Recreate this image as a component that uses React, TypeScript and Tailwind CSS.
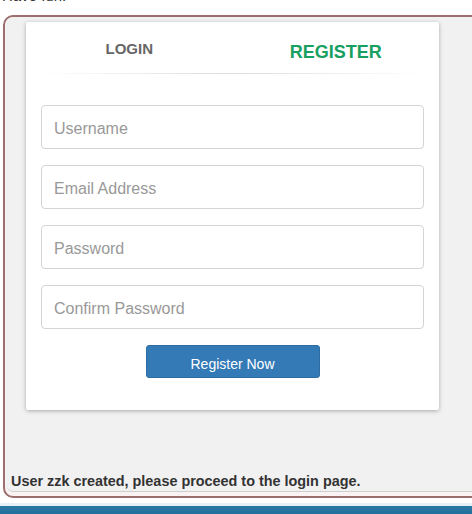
import React from "react";

export default function App() {
  const fields = ["Username", "Email Address", "Password", "Confirm Password"];
  return (
    <div className="relative w-[472px] h-[514px] overflow-hidden bg-white font-['Liberation_Sans',Arial,sans-serif]">
      <div className="h-[15px] overflow-hidden">
        <div className="-mt-[12px] ml-[2px] text-[15px] leading-[16px] text-[#333]">Have fun.</div>
      </div>
      <div className="ml-[3px] w-[490px] h-[483px] border-2 border-[#9c6e6e] rounded-[10px] bg-[#fbf3f3] pt-0 pl-[1px] pb-[4px]">
        <div className="h-full flex flex-col bg-[#f1f1f1] border-b border-[#cfcfcf] rounded-tl-[8px] rounded-bl-[8px]">
          <div className="ml-[20px] mt-[5px] w-[413px] h-[388px] bg-white rounded-[2px] shadow-[0_1px_4px_rgba(0,0,0,0.3)] flex flex-col">
            <div className="flex h-[51px]">
              <div className="flex-1 flex justify-center pt-[19px]">
                <span className="text-[15px] leading-[16px] font-bold text-[#666]">LOGIN</span>
              </div>
              <div className="flex-1 flex justify-center pt-[20px]">
                <span className="text-[18px] leading-[20px] font-bold text-[#17a060]">REGISTER</span>
              </div>
            </div>
            <div className="mx-[14px] h-px bg-gradient-to-r from-transparent via-[#dcdcdc] to-transparent" />
            <div className="mt-[31px] px-[15px] flex flex-col gap-[16px]">
              {fields.map((f) => (
                <input
                  key={f}
                  placeholder={f}
                  className="h-[44px] w-full rounded-[4px] border border-[#d4d4d4] bg-white px-[12px] pt-[4px] text-[16px] text-[#555] placeholder:text-[#999] outline-none font-['Liberation_Sans',Arial,sans-serif]"
                />
              ))}
            </div>
            <div className="mt-[16px] flex justify-center">
              <button className="w-[174px] h-[33px] pt-[4px] rounded-[3px] bg-[#337ab7] border border-[#2e6da4] text-white text-[14px] leading-[16px] font-['Liberation_Sans',Arial,sans-serif]">
                Register Now
              </button>
            </div>
          </div>
          <div className="mt-auto pl-[5px] pb-[2px] text-[14.4px] leading-[16px] font-bold text-[#333]">
            User zzk created, please proceed to the login page.
          </div>
        </div>
      </div>
      <div className="h-[5px] bg-white" />
      <div className="h-[3px] bg-[#e6f2f8]" />
      <div className="h-[20px] bg-gradient-to-b from-[#2a7aa6] to-[#1b5f8c]" />
    </div>
  );
}
